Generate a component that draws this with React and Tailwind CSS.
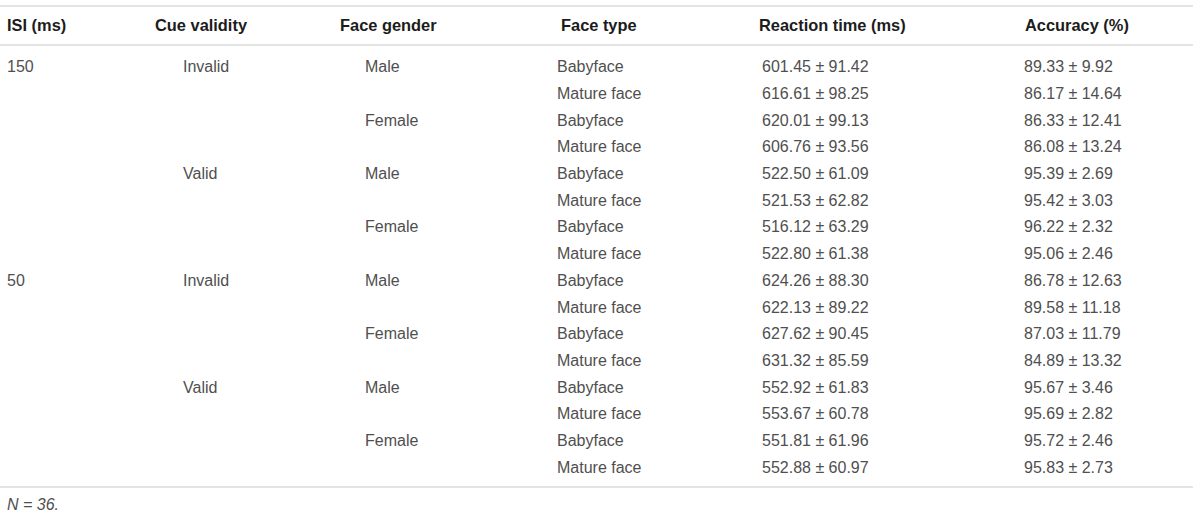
import React from "react";

const rows = [
  ["150", "Invalid", "Male", "Babyface", "601.45 ± 91.42", "89.33 ± 9.92"],
  ["", "", "", "Mature face", "616.61 ± 98.25", "86.17 ± 14.64"],
  ["", "", "Female", "Babyface", "620.01 ± 99.13", "86.33 ± 12.41"],
  ["", "", "", "Mature face", "606.76 ± 93.56", "86.08 ± 13.24"],
  ["", "Valid", "Male", "Babyface", "522.50 ± 61.09", "95.39 ± 2.69"],
  ["", "", "", "Mature face", "521.53 ± 62.82", "95.42 ± 3.03"],
  ["", "", "Female", "Babyface", "516.12 ± 63.29", "96.22 ± 2.32"],
  ["", "", "", "Mature face", "522.80 ± 61.38", "95.06 ± 2.46"],
  ["50", "Invalid", "Male", "Babyface", "624.26 ± 88.30", "86.78 ± 12.63"],
  ["", "", "", "Mature face", "622.13 ± 89.22", "89.58 ± 11.18"],
  ["", "", "Female", "Babyface", "627.62 ± 90.45", "87.03 ± 11.79"],
  ["", "", "", "Mature face", "631.32 ± 85.59", "84.89 ± 13.32"],
  ["", "Valid", "Male", "Babyface", "552.92 ± 61.83", "95.67 ± 3.46"],
  ["", "", "", "Mature face", "553.67 ± 60.78", "95.69 ± 2.82"],
  ["", "", "Female", "Babyface", "551.81 ± 61.96", "95.72 ± 2.46"],
  ["", "", "", "Mature face", "552.88 ± 60.97", "95.83 ± 2.73"],
];

const headers = ["ISI (ms)", "Cue validity", "Face gender", "Face type", "Reaction time (ms)", "Accuracy (%)"];
const headPad = ["pl-[7px]", "pl-[5px]", "pl-[5px]", "pl-[11px]", "pl-[9px]", "pl-[10px]"];
const bodyPad = ["pl-[7px]", "pl-[33px]", "pl-[30px]", "pl-[7px]", "pl-[12px]", "pl-[9px]"];
const grid = "grid grid-cols-[150px_185px_215px_200px_265px_178px]";

export default function App() {
  return (
    <div className="w-[1200px] h-[514px] bg-white pt-[5px]" style={{ fontFamily: '"Liberation Sans", Arial, sans-serif' }}>
      <div className="w-[1193px]">
        <div className={`${grid} h-[41px] items-center border-t-2 border-b-2 border-[#e4e4e4] text-[16.4px] font-bold text-[#1c1c1c]`}>
          {headers.map((h, i) => (
            <div key={i} className={`${headPad[i]} whitespace-nowrap`}>{h}</div>
          ))}
        </div>
        <div className="pt-[8px] pb-[5px] border-b-2 border-[#e4e4e4] text-[16px] text-[#4f4f4f]">
          {rows.map((r, ri) => (
            <div key={ri} className={`${grid} h-[26.7px] items-center`}>
              {r.map((c, ci) => (
                <div key={ci} className={`${bodyPad[ci]} whitespace-nowrap`}>{c}</div>
              ))}
            </div>
          ))}
        </div>
        <div className="pl-[7px] pt-[5px] text-[16px] italic text-[#4f4f4f]">N = 36.</div>
      </div>
    </div>
  );
}
